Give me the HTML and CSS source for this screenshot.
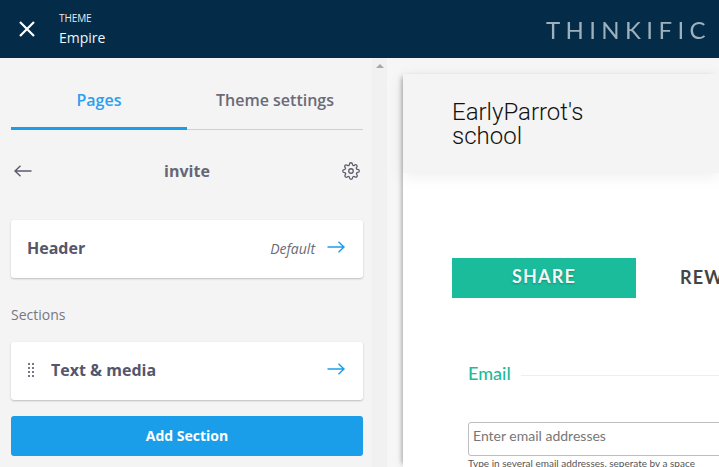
FILE: index.html
```html
<!DOCTYPE html>
<html lang="en">
<head>
<meta charset="utf-8">
<title>Theme editor</title>
<link rel="stylesheet" href="styles.css">
</head>
<body>
<header class="topbar">
  <svg class="close" width="18" height="18" viewBox="0 0 18 18"><path d="M2 2 L16 16 M16 2 L2 16" stroke="#fff" stroke-width="2.2" fill="none"/></svg>
  <div class="theme">
    <div class="theme-label">THEME</div>
    <div class="theme-name">Empire</div>
  </div>
  <div class="logo">THINKIFIC</div>
</header>
<div class="main">
  <aside class="sidebar">
    <nav class="tabs">
      <div class="tab tab-active">Pages</div>
      <div class="tab">Theme settings</div>
    </nav>
    <div class="page-row">
      <svg class="icon" width="18" height="12" viewBox="0 0 18 12"><path d="M17.5 6 H1 M6.5 .7 L1 6 L6.5 11.3" stroke="#5b5b6b" stroke-width="1.4" fill="none"/></svg>
      <div class="page-title">invite</div>
      <svg class="icon" width="18" height="18" viewBox="0 0 24 24" fill="none" stroke="#5b5b6b" stroke-width="1.7" stroke-linejoin="round"><circle cx="12" cy="12" r="3"/><path d="M19.4 15a1.65 1.65 0 0 0 .33 1.82l.06.06a2 2 0 1 1-2.83 2.83l-.06-.06a1.65 1.65 0 0 0-2.8 1.17V21a2 2 0 1 1-4 0v-.09a1.65 1.65 0 0 0-2.8-1.17l-.06.06a2 2 0 1 1-2.83-2.83l.06-.06a1.65 1.65 0 0 0-1.17-2.8H3a2 2 0 1 1 0-4h.09a1.65 1.65 0 0 0 1.17-2.8l-.06-.06a2 2 0 1 1 2.83-2.83l.06.06a1.65 1.65 0 0 0 2.8-1.17V3a2 2 0 1 1 4 0v.09a1.65 1.65 0 0 0 2.8 1.17l.06-.06a2 2 0 1 1 2.83 2.83l-.06.06a1.65 1.65 0 0 0 1.17 2.8H21a2 2 0 1 1 0 4h-.09a1.65 1.65 0 0 0-1.51 1z"/></svg>
    </div>
    <div class="card card-header">
      <div class="card-title">Header</div>
      <div class="card-meta">Default</div>
      <svg class="icon" width="18" height="12" viewBox="0 0 18 12"><path d="M.5 6 H17 M11.5 .7 L17 6 L11.5 11.3" stroke="#1b9eea" stroke-width="1.4" fill="none"/></svg>
    </div>
    <div class="sections-label">Sections</div>
    <div class="card card-section">
      <svg class="grip" width="6" height="14" viewBox="0 0 6 14" fill="#77778a"><rect x="0" y="0" width="2" height="2"/><rect x="4" y="0" width="2" height="2"/><rect x="0" y="4" width="2" height="2"/><rect x="4" y="4" width="2" height="2"/><rect x="0" y="8" width="2" height="2"/><rect x="4" y="8" width="2" height="2"/><rect x="0" y="12" width="2" height="2"/><rect x="4" y="12" width="2" height="2"/></svg>
      <div class="card-title">Text &amp; media</div>
      <svg class="icon" width="18" height="12" viewBox="0 0 18 12"><path d="M.5 6 H17 M11.5 .7 L17 6 L11.5 11.3" stroke="#1b9eea" stroke-width="1.4" fill="none"/></svg>
    </div>
    <button class="add-btn">Add Section</button>
  </aside>
  <div class="scrolltrack"><div class="scroll-arrow"></div></div>
  <section class="preview">
    <div class="site-header">
      <div class="school">EarlyParrot's<br>school</div>
    </div>
    <div class="site-body">
      <div class="site-tabs">
        <div class="share">SHARE</div>
        <div class="rew">REWARDS</div>
      </div>
      <div class="email-head">
        <div class="email-label">Email</div>
        <div class="email-line"></div>
      </div>
      <div class="email-input">Enter email addresses</div>
      <div class="email-hint">Type in several email addresses, seperate by a space</div>
    </div>
  </section>
</div>
</body>
</html>
```
FILE: styles.css
```css
* { box-sizing: border-box; }
html, body { margin: 0; height: 100%; overflow: hidden; }
body { width: 719px; height: 467px; font-family: "Open Sans", sans-serif; background: #f6f6f6; }

.topbar { height: 58px; background: #042c48; display: flex; align-items: center; color: #fff; position: relative; }
.close { margin-left: 18px; flex: none; }
.theme { margin-left: 23px; }
.theme-label { font-size: 10px; line-height: 14px; letter-spacing: -.1px; color: #e6ebef; }
.theme-name { font-size: 14px; line-height: 19px; margin-top: 3px; color: #f0f6fb; }
.logo { margin-left: auto; margin-right: 8px; font-family: Lato, sans-serif; font-size: 24px; letter-spacing: 5.4px; color: #9db0bc; font-weight: 400; filter: blur(.5px); }

.main { display: flex; height: 409px; overflow: hidden; }
.sidebar { width: 372px; flex: none; padding: 0 9px 0 11px; background: #f4f4f4; }

.tabs { display: flex; height: 72px; border-bottom: 1px solid #cfcfcf; }
.tab { width: 176px; text-align: center; font-size: 16px; font-weight: 600; line-height: 22px; padding-top: 31px; color: #6a6a78; }
.tab-active { color: #2b9ff0; border-bottom: 3px solid #1b9eea; height: 72px; }

.page-row { display: flex; align-items: center; justify-content: space-between; height: 82px; padding: 0 3px 0 3px; }
.page-title { font-size: 16px; font-weight: 700; color: #666674; }

.card { display: flex; align-items: center; background: #fff; height: 58px; border-radius: 3px; box-shadow: 0 1px 2px rgba(0,0,0,.22); padding: 0 18px 2px 16px; }
.card .icon { margin-top: -2px; }
.card-header { margin-top: 8px; }
.card-title { font-size: 16px; font-weight: 700; color: #56566a; flex: 1; }
.card-meta { font-size: 14px; font-style: italic; color: #6a6a78; margin-right: 12px; }
.grip { margin-left: 1px; margin-right: 17px; flex: none; }
.sections-label { font-size: 14px; line-height: 19px; color: #777784; margin-top: 27px; margin-bottom: 18px; }
.add-btn { display: block; width: 352px; height: 40px; margin-top: 16px; padding: 0 0 2px; background: #1b9eea; border: 0; border-radius: 3px; color: #fff; font-family: "Open Sans", sans-serif; font-size: 14px; font-weight: 700; }

.scrolltrack { width: 15px; flex: none; background: #f1f1f1; position: relative; }
.scroll-arrow { position: absolute; top: 6px; left: 4px; width: 0; height: 0; border-left: 4px solid transparent; border-right: 4px solid transparent; border-bottom: 4px solid #a8a8a8; }

.preview { flex: 1; margin-left: 16px; margin-top: 16px; min-width: 0; background: #fff; box-shadow: -4px 0 5px -3px rgba(0,0,0,.35); }
.site-header { height: 99px; background: #f4f4f4; padding: 26px 0 0 49px; box-shadow: 0 3px 16px rgba(0,0,0,.07); position: relative; }
.school { font-family: Roboto, sans-serif; font-weight: 300; font-size: 24px; line-height: 24px; color: #111; white-space: nowrap; }
.site-body { padding: 85px 0 0 49px; overflow: hidden; }
.site-tabs { display: flex; align-items: center; white-space: nowrap; }
.share { flex: none; width: 184px; height: 40px; background: #1bbc9b; color: #f2f5f4; font-family: Lato, sans-serif; font-size: 18px; font-weight: 700; letter-spacing: 1.2px; text-align: center; line-height: 37px; text-shadow: 0 1px 2px rgba(0,0,0,.25); }
.rew { flex: none; margin-left: 44px; padding-bottom: 3px; font-family: Lato, sans-serif; font-size: 18px; font-weight: 700; letter-spacing: 1.2px; color: #444; }
.email-head { display: flex; align-items: center; margin: 63px 0 0 16px; height: 24px; }
.email-label { font-family: Lato, sans-serif; font-size: 18px; color: #1bbc9b; font-weight: 500; }
.email-line { flex: 1; height: 1px; background: #eee; margin-left: 10px; margin-top: 4px; }
.email-input { margin: 37px 0 0 16px; height: 34px; width: 400px; border: 1px solid #bdbdbd; border-radius: 3px; padding-left: 4px; font-family: Lato, sans-serif; font-size: 14px; line-height: 26px; color: #777; }
.email-hint { margin: 1px 0 0 16px; font-family: Lato, sans-serif; font-size: 10px; line-height: 12px; color: #555; white-space: nowrap; }
```
